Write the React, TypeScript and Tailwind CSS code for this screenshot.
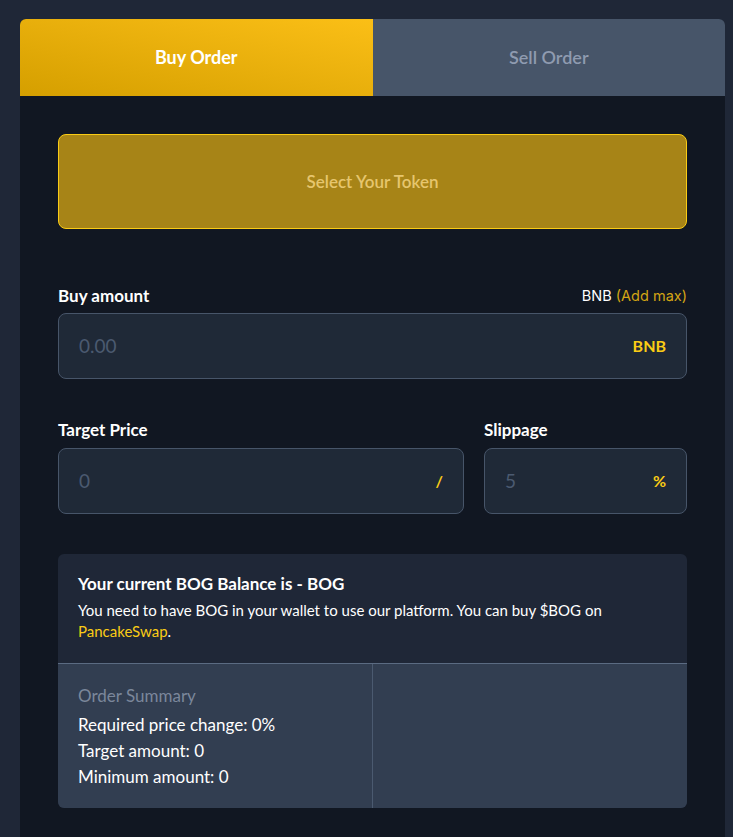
import React from "react";

const jost = { fontFamily: "Lato, 'Open Sans', sans-serif" };

function Field({ value, unit }: { value: string; unit: string }) {
  return (
    <div className="flex h-[66px] items-center justify-between rounded-lg border border-[#475569] bg-[#1f2937] px-5">
      <span className="text-[19px] text-[#4b5a70]">{value}</span>
      <span className="text-base font-bold text-[#facc15]">{unit}</span>
    </div>
  );
}

export default function App() {
  return (
    <div className="min-h-[837px] bg-[#1f2737] px-5 pt-[19px]" style={jost}>
      <div className="min-h-[818px] w-[705px] overflow-hidden rounded-t-md bg-[#111722]">
        <div className="flex h-[77px]">
          <button className="flex-1 bg-gradient-to-tr from-[#d59f00] to-[#fbbf16] text-[18px] font-bold text-white">
            Buy Order
          </button>
          <button className="flex-1 bg-[#475569] text-[18px] font-semibold text-[#8f9bb0]">
            Sell Order
          </button>
        </div>

        <div className="px-[38px] pt-[38px]">
          <button className="flex h-[95px] w-full items-center justify-center rounded-lg border border-[#facc15] bg-[#a78417] text-[17px] font-semibold text-[#e6c66e]">
            Select Your Token
          </button>

          <div className="mt-[55px] flex items-center justify-between leading-6">
            <span className="text-[17px] font-bold text-white">Buy amount</span>
            <span className="text-[14.5px] text-white" style={{ fontFamily: "Inter, sans-serif" }}>
              BNB <span className="text-[#d4a514]">(Add max)</span>
            </span>
          </div>
          <div className="mt-[5px]">
            <Field value="0.00" unit="BNB" />
          </div>

          <div className="mt-[39px] flex gap-5">
            <div className="flex-1">
              <div className="text-[17px] font-bold leading-6 text-white">Target Price</div>
              <div className="mt-[6px]">
                <Field value="0" unit="/" />
              </div>
            </div>
            <div className="w-[203px]">
              <div className="text-[17px] font-bold leading-6 text-white">Slippage</div>
              <div className="mt-[6px]">
                <Field value="5" unit="%" />
              </div>
            </div>
          </div>

          <div className="mt-10 overflow-hidden rounded-md bg-[#1f2737]">
            <div className="px-5 pb-[21px] pt-[18px]">
              <div className="text-[17px] font-bold leading-6 text-white">
                Your current BOG Balance is - BOG
              </div>
              <p className="mt-[4px] text-[15px] leading-[21px] text-white">
                You need to have BOG in your wallet to use our platform. You can buy $BOG on{" "}
                <a className="text-[#facc15]">PancakeSwap</a>.
              </p>
            </div>
            <div className="grid grid-cols-2 border-t border-[#5b6b82] bg-[#323e51]">
              <div className="border-r border-[#4b5a70] px-5 pb-[18px] pt-[19px] text-[17px] text-white">
                <div className="leading-[26px] text-[#7b879b]">Order Summary</div>
                <div className="mt-[3px] leading-[26px]">Required price change: 0%</div>
                <div className="leading-[26px]">Target amount: 0</div>
                <div className="leading-[26px]">Minimum amount: 0</div>
              </div>
              <div />
            </div>
          </div>
        </div>
      </div>
    </div>
  );
}
